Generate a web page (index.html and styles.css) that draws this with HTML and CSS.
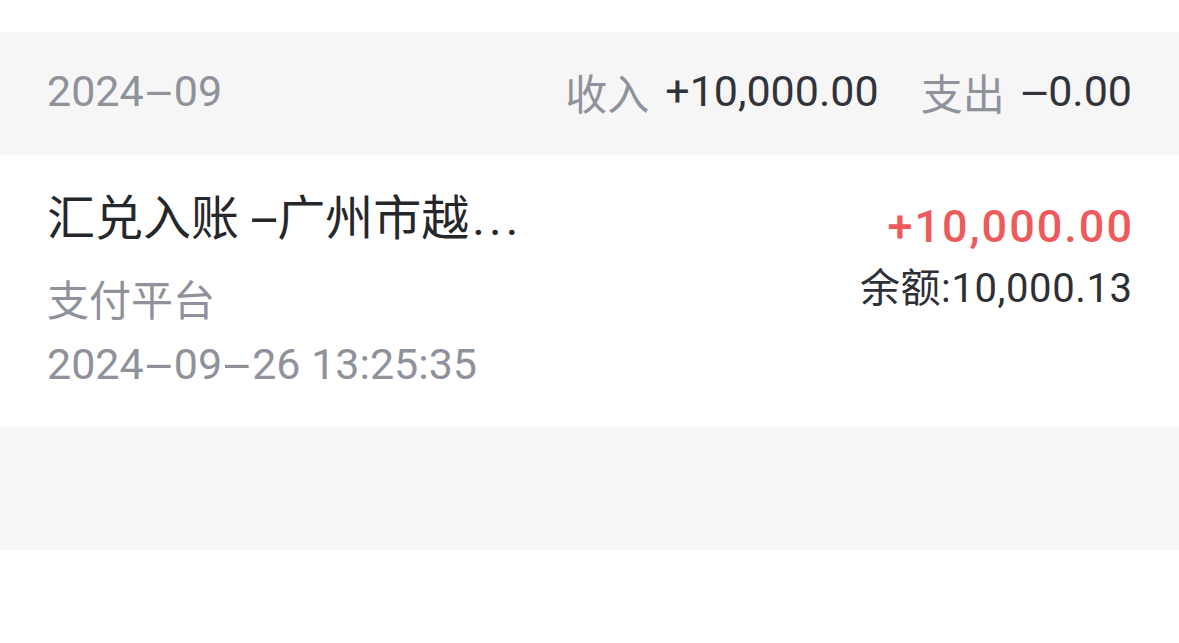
FILE: index.html
```html
<!DOCTYPE html>
<html lang="zh-CN">
<head>
<meta charset="utf-8">
<title>账单</title>
<link rel="stylesheet" href="styles.css">
</head>
<body>
<div class="page">
  <div class="top-space"></div>
  <div class="month-bar">
    <span class="month">2024<span class="dash">-</span>09</span>
    <div class="totals">
      <span class="label">收入</span>
      <span class="value">+10,000.00</span>
      <span class="label label-out">支出</span>
      <span class="value"><span class="dash">-</span>0.00</span>
    </div>
  </div>
  <div class="record">
    <div class="record-left">
      <div class="title">汇兑入账 <span class="dash">-</span>广州市越<span class="dots">...</span></div>
      <div class="sub">支付平台</div>
      <div class="time">2024<span class="dash">-</span>09<span class="dash">-</span>26 13:25:35</div>
    </div>
    <div class="record-right">
      <div class="amount">+10,000.00</div>
      <div class="balance">余额:10,000.13</div>
    </div>
  </div>
  <div class="band"></div>
</div>
</body>
</html>
```

FILE: styles.css
```css
html, body {
  margin: 0;
  padding: 0;
  background: #ffffff;
}

body {
  font-family: "Roboto", "Noto Sans CJK SC", sans-serif;
  width: 1179px;
  height: 643px;
  overflow: hidden;
}

.dash {
  display: inline-block;
  width: 0.7em;
  text-align: center;
  transform: scaleX(2.3);
}

.top-space {
  height: 32px;
}

.month-bar {
  height: 123px;
  background: #f6f6f7;
  display: flex;
  align-items: center;
  justify-content: space-between;
  padding: 0 47px 5px;
  box-sizing: border-box;
}

.month {
  font-size: 43px;
  color: #8f929a;
}

.totals {
  display: flex;
  align-items: center;
}

.label {
  color: #8f929a;
  font-size: 42px;
  margin-right: 16px;
}

.label-out {
  margin-left: 42px;
}

.value {
  font-size: 43px;
  color: #30333a;
}

.value .dash {
  width: 0.64em;
}

.record {
  display: flex;
  justify-content: space-between;
  padding: 34px 47px 35px;
  background: #ffffff;
}

.title {
  font-size: 48px;
  line-height: 60px;
  color: #25272b;
}

.title .dash {
  width: 0.55em;
  transform: scaleX(2.1);
}

.dots {
  margin-left: 3px;
  letter-spacing: 4px;
}

.sub {
  margin-top: 25px;
  font-size: 42px;
  line-height: 56px;
  color: #8f929a;
}

.time {
  margin-top: 6px;
  font-size: 43px;
  line-height: 56px;
  color: #8f929a;
}

.record-right {
  padding-top: 10px;
  text-align: right;
}

.amount {
  font-size: 45px;
  line-height: 56px;
  font-weight: 500;
  color: #ee5a5c;
  letter-spacing: 2px;
  margin-right: -2px;
}

.balance {
  margin-top: 9px;
  font-size: 40px;
  line-height: 50px;
  color: #2e3035;
  letter-spacing: 0.6px;
  margin-right: -0.6px;
}

.band {
  height: 123px;
  background: #f6f6f7;
}
```
